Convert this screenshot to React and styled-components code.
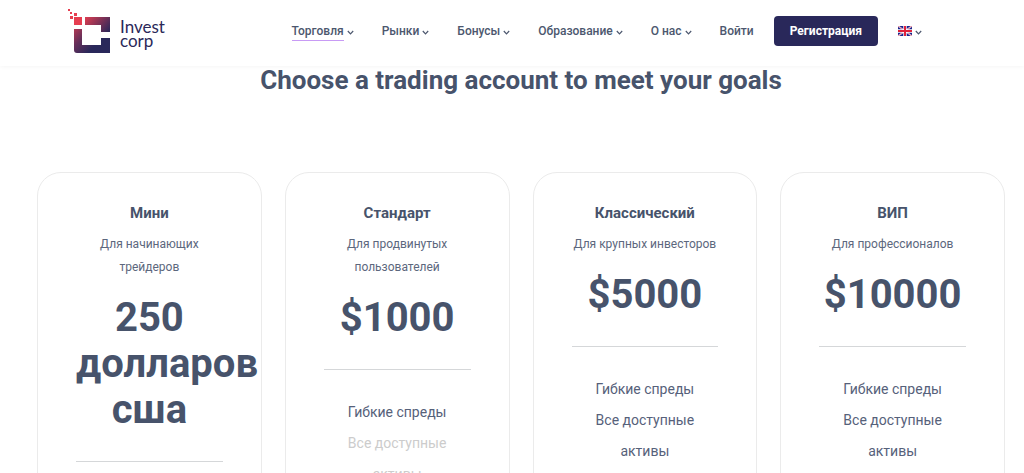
import React from "react";
import styled, { createGlobalStyle, css } from "styled-components";

const GlobalStyle = createGlobalStyle`
  *, *::before, *::after { box-sizing: border-box; }
  body {
    margin: 0;
    background: #fff;
    color: #47536b;
    font-family: Roboto, "Liberation Sans", sans-serif;
  }
  html { overflow: hidden; }
`;

const Header = styled.header`
  position: relative;
  display: flex;
  align-items: center;
  justify-content: space-between;
  height: 66px;
  padding: 0 102px 4px 68px;
  background: #fff;
  box-shadow: 0 0 5px rgba(0, 0, 0, 0.06);
`;

const Brand = styled.a`
  display: flex;
  align-items: center;
  gap: 10px;
  color: #2a2859;
  font: 17px/14px Lato, "Open Sans", sans-serif;
  text-decoration: none;
`;

const Mark = styled.svg`
  display: block;
  width: 42px;
  height: 46px;
`;

const BrandName = styled.span`
  display: flex;
  flex-direction: column;
  padding-top: 6px;
`;

const Nav = styled.nav`
  display: flex;
  align-items: center;
  gap: 28px;
`;

const navText = css`
  padding: 0;
  border: 0;
  background: none;
  color: #4c576e;
  font: 500 12px/18px Roboto, sans-serif;
  text-decoration: none;
  cursor: pointer;
`;

const MenuButton = styled.button`
  ${navText}
  display: flex;
  align-items: center;
  gap: 3px;
`;

const MenuLabel = styled.span`
  border-bottom: 1px solid ${(p) => (p.$active ? "#c89bf5" : "transparent")};
`;

const NavLink = styled.a`
  ${navText}
`;

const Actions = styled.div`
  display: flex;
  align-items: center;
  gap: 20px;
`;

const RegisterButton = styled.button`
  height: 30px;
  padding: 0 16px;
  border: 0;
  border-radius: 4px;
  background: #29285a;
  color: #fff;
  font: 700 12px/18px Roboto, sans-serif;
  cursor: pointer;
`;

const ChevronIcon = styled.svg`
  display: block;
  width: 7px;
  height: 5px;
  margin-top: 2px;
`;

const FlagIcon = styled.svg`
  display: block;
  width: 14px;
  height: 10px;
`;

const Main = styled.main`
  padding: 0 19px 0 37px;
`;

const Heading = styled.h1`
  margin: 0 0 78px;
  font-size: 26px;
  line-height: 28px;
  font-weight: 700;
  text-align: center;
`;

const Plans = styled.section`
  display: grid;
  grid-template-columns: repeat(4, minmax(0, 1fr));
  gap: 23px;
`;

const Card = styled.article`
  padding: 28px 38px;
  border: 1px solid #ebebeb;
  border-radius: 24px;
  text-align: center;
`;

const PlanName = styled.h2`
  margin: 0 0 8px;
  font-size: 15px;
  line-height: 24px;
  font-weight: 700;
`;

const Audience = styled.p`
  margin: 0;
  color: #5c677d;
  font-size: 12px;
  line-height: 23px;
`;

const Price = styled.p`
  margin: 16px 0 0;
  font-size: 40px;
  line-height: 46px;
  font-weight: 700;
`;

const Divider = styled.hr`
  height: 1px;
  margin: 28px 0 27px;
  border: 0;
  background: #d5d7d9;
`;

const Features = styled.ul`
  margin: 0;
  padding: 0;
  list-style: none;
`;

const Feature = styled.li`
  color: ${(p) => (p.$disabled ? "#ccc" : "#56617a")};
  font-size: 14px;
  line-height: 31px;
`;

function Chevron() {
  return (
    <ChevronIcon viewBox="0 0 7 5" aria-hidden="true">
      <path d="M.8 1 3.5 3.8 6.2 1" fill="none" stroke="#4c576e" strokeWidth="1.2" />
    </ChevronIcon>
  );
}

function Logo() {
  return (
    <Mark viewBox="0 0 42 46" aria-hidden="true">
      <defs>
        <linearGradient id="top" x1="16" y1="8" x2="38" y2="26" gradientUnits="userSpaceOnUse">
          <stop offset="0" stopColor="#e63e50" />
          <stop offset="1" stopColor="#31285a" />
        </linearGradient>
        <linearGradient id="bottom" x1="4" y1="18" x2="26" y2="38" gradientUnits="userSpaceOnUse">
          <stop offset="0" stopColor="#c83b52" />
          <stop offset=".5" stopColor="#672f59" />
          <stop offset="1" stopColor="#29285a" />
        </linearGradient>
      </defs>
      <path fill="#e63e50" d="M6 9h8v8H6zM2 8h3v3H2zM6 5h3v3H6zM2 4h2v2H2zM0 1h2v2H0z" />
      <path fill="url(#top)" d="M17 9h25v15h-9v-7H17z" />
      <path fill="url(#bottom)" d="M6 21h8v16h19v-7h9v15H9q-3 0-3-3z" />
    </Mark>
  );
}

function Flag() {
  return (
    <FlagIcon viewBox="0 0 14 10" role="img" aria-label="English">
      <path fill="#1a238c" d="M0 0h14v10H0z" />
      <path stroke="#fff" strokeWidth="1.4" d="m0 0 14 10M14 0 0 10" />
      <path stroke="#e0203a" strokeWidth=".5" d="m0 0 14 10M14 0 0 10" />
      <path stroke="#fff" strokeWidth="3.4" d="M7 0v10M0 5h14" />
      <path stroke="#e0203a" strokeWidth="2" d="M7 0v10M0 5h14" />
    </FlagIcon>
  );
}

const menus = ["Торговля", "Рынки", "Бонусы", "Образование", "О нас"];

const plans = [
  { name: "Мини", audience: "Для начинающих трейдеров", price: "250 долларов сша" },
  { name: "Стандарт", audience: "Для продвинутых пользователей", price: "$1000", limited: true },
  { name: "Классический", audience: "Для крупных инвесторов", price: "$5000" },
  { name: "ВИП", audience: "Для профессионалов", price: "$10000" },
];

export default function App() {
  return (
    <>
      <GlobalStyle />
      <Header>
        <Brand href="#">
          <Logo />
          <BrandName>
            <span>Invest</span>
            <span>corp</span>
          </BrandName>
        </Brand>
        <Actions>
          <Nav>
            {menus.map((label, i) => (
              <MenuButton key={label} type="button">
                <MenuLabel $active={i === 0}>{label}</MenuLabel>
                <Chevron />
              </MenuButton>
            ))}
            <NavLink href="#">Войти</NavLink>
          </Nav>
          <RegisterButton type="button">Регистрация</RegisterButton>
          <MenuButton type="button" aria-label="Язык">
            <Flag />
            <Chevron />
          </MenuButton>
        </Actions>
      </Header>
      <Main>
        <Heading>Choose a trading account to meet your goals</Heading>
        <Plans>
          {plans.map((plan) => (
            <Card key={plan.name}>
              <PlanName>{plan.name}</PlanName>
              <Audience>{plan.audience}</Audience>
              <Price>{plan.price}</Price>
              <Divider />
              <Features>
                <Feature>Гибкие спреды</Feature>
                <Feature $disabled={plan.limited}>Все доступные активы</Feature>
              </Features>
            </Card>
          ))}
        </Plans>
      </Main>
    </>
  );
}
